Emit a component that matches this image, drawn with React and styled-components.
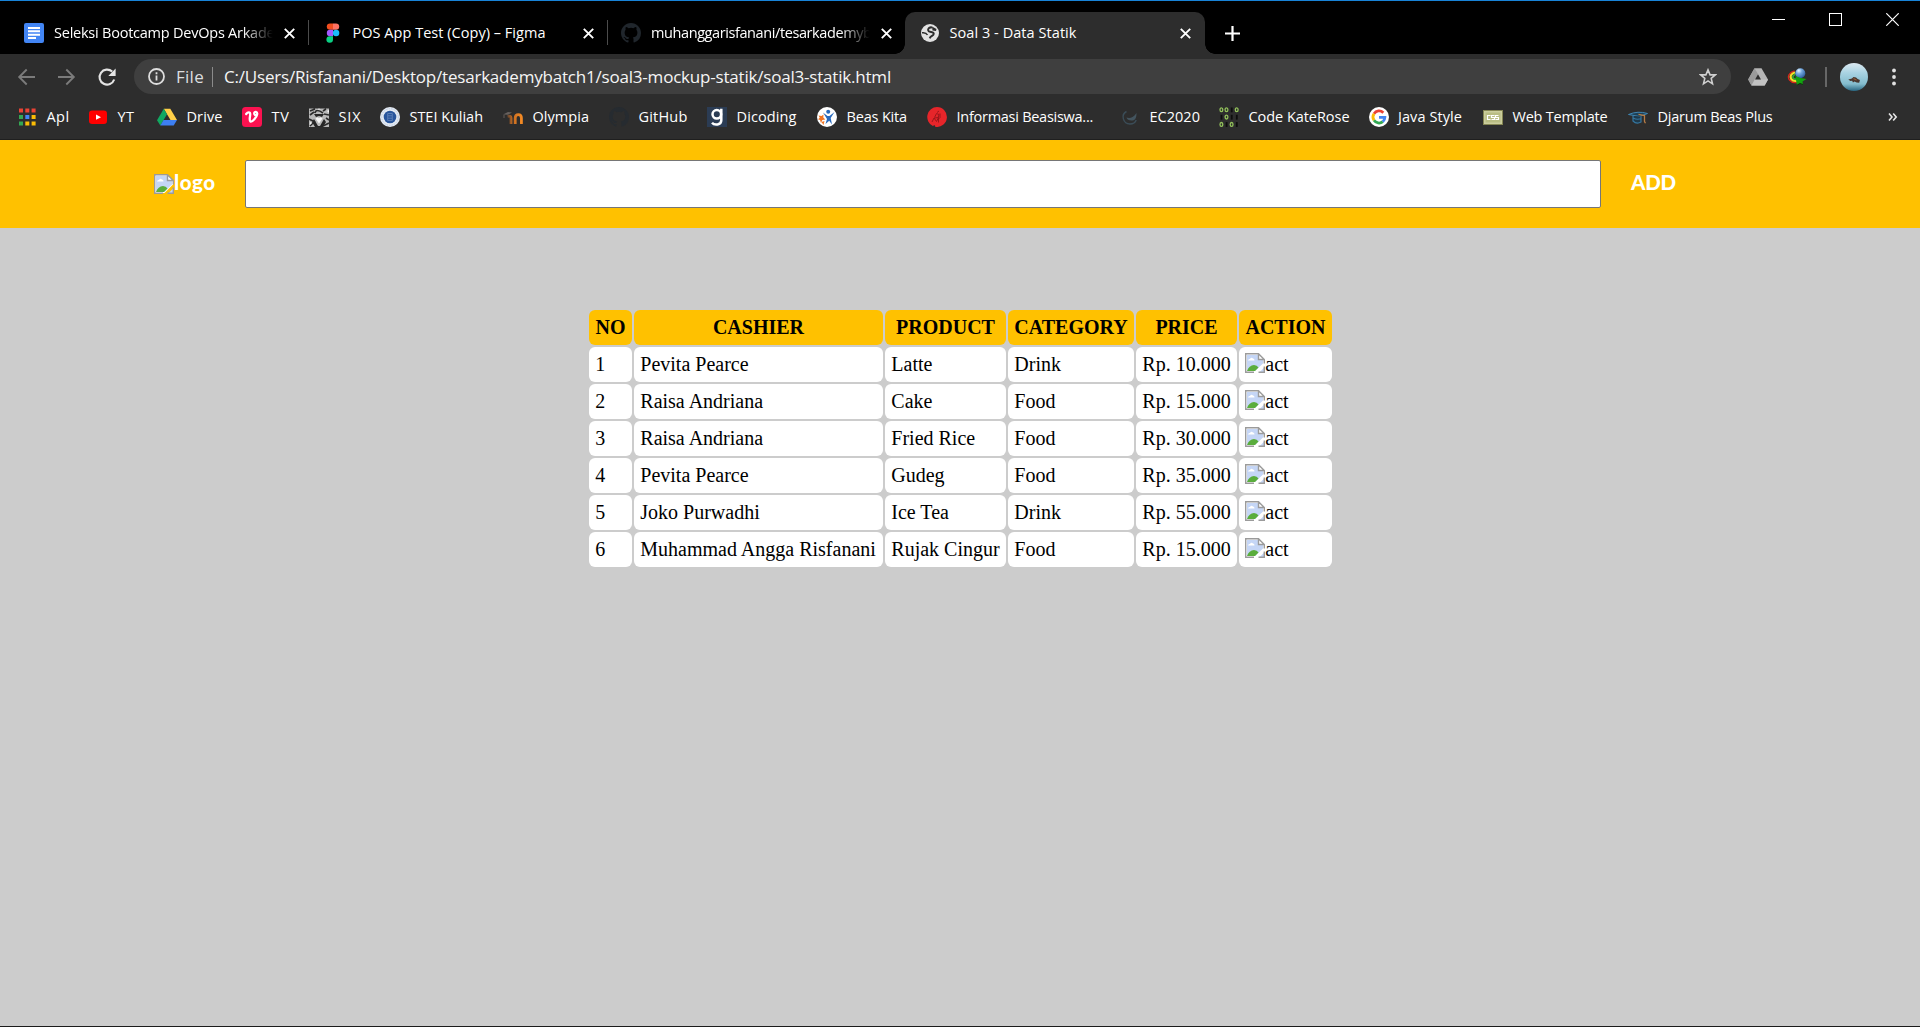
import React, { useLayoutEffect, useRef, useState } from "react";
import styled, { createGlobalStyle, css } from "styled-components";

const GlobalStyle = createGlobalStyle`
  *, *::before, *::after { box-sizing: border-box; }
  html, body { margin: 0; padding: 0; }
  body { background: #cccccc; overflow: hidden; }
  svg { display: block; flex: none; }
`;

const ui = css`
  font-family: "Open Sans", "Noto Sans", sans-serif;
  font-weight: 400;
  white-space: nowrap;
`;

const Window = styled.div`
  width: 1920px;
  height: 1027px;
  display: flex;
  flex-direction: column;
  background: #cccccc;
  border-bottom: 1px solid #1b1b1b;
`;

/* ---------- tab strip ---------- */
const TabStrip = styled.div`
  height: 54px;
  flex: none;
  display: flex;
  align-items: flex-end;
  background: #000;
  border-top: 1px solid #1883d7;
  padding-left: 10.5px;
`;

const Tab = styled.div`
  position: relative;
  width: 298.5px;
  height: 42px;
  flex: none;
  display: flex;
  align-items: center;
  padding: 0 14px 0 13.5px;
  color: #fff;
  background: ${(p) => (p.$active ? "#2d2d2d" : "transparent")};
  border-radius: 10px 10px 0 0;
  ${(p) =>
    p.$active &&
    css`
      width: 300px;
      margin-left: -1px;
      padding-left: 14.5px;
      &::before,
      &::after {
        content: "";
        position: absolute;
        bottom: 0;
        width: 10px;
        height: 10px;
      }
      &::before {
        left: -10px;
        background: radial-gradient(circle at 0 0, transparent 9.5px, #2d2d2d 10px);
      }
      &::after {
        right: -10px;
        background: radial-gradient(circle at 100% 0, transparent 9.5px, #2d2d2d 10px);
      }
    `}
`;

const TabTitle = styled.div`
  ${ui}
  flex: 1;
  min-width: 0;
  height: 22px;
  line-height: 22px;
  margin-left: 10px;
  margin-right: 9px;
  font-size: 14.5px;
  ${(p) =>
    p.$fade &&
    css`
      mask-image: linear-gradient(to right, #000 calc(100% - 32px), transparent 99%);
    `}
`;

const TabDivider = styled.div`
  position: absolute;
  right: 0;
  top: 8px;
  width: 1px;
  height: 25px;
  background: #4c4c4c;
`;

const NewTab = styled.div`
  width: 15px;
  height: 42px;
  margin-left: 20px;
  display: flex;
  align-items: center;
`;

const WindowButtons = styled.div`
  margin-left: auto;
  align-self: flex-start;
  padding: 12px 21px 0 0;
  display: flex;
  gap: 44px;
`;

/* ---------- toolbar ---------- */
const Toolbar = styled.div`
  height: 45px;
  flex: none;
  display: flex;
  align-items: center;
  background: #2d2d2d;
  padding: 0 0 0 17px;
`;

const NavButtons = styled.div`
  display: flex;
  gap: 20px;
  width: 117px;
`;

const Omnibox = styled.div`
  width: 1597px;
  height: 35px;
  flex: none;
  border-radius: 18px;
  background: #3f3f3f;
  display: flex;
  align-items: center;
  padding: 0 14px;
  color: #f1f3f4;
`;

const UrlText = styled.div`
  ${ui}
  font-size: 17px;
  line-height: 24px;
  margin-left: ${(p) => p.$left}px;
  color: ${(p) => p.$color};
`;

const Bar = styled.div`
  width: ${(p) => p.$w || 1}px;
  height: 20px;
  flex: none;
  margin-left: ${(p) => p.$left}px;
  background: ${(p) => p.$color};
`;

const StarSlot = styled.div`
  margin-left: auto;
`;

const Extensions = styled.div`
  display: flex;
  align-items: center;
  padding-left: 17px;
`;

const Spaced = styled.div`
  margin-left: ${(p) => p.$left}px;
`;

/* ---------- bookmarks ---------- */
const BookmarkBar = styled.div`
  height: 41px;
  flex: none;
  display: flex;
  align-items: center;
  background: #2d2d2d;
  border-bottom: 1px solid #1f1f1f;
  padding: 0 0 4px 17px;
`;

const Bookmark = styled.div`
  width: ${(p) => p.$pitch}px;
  height: 24px;
  flex: none;
  display: flex;
  align-items: center;
  gap: 9.5px;
`;

const BookmarkLabel = styled.div`
  ${ui}
  font-size: 14.5px;
  line-height: 22px;
  color: #fff;
`;

/* ---------- page ---------- */
const Header = styled.header`
  height: 88px;
  flex: none;
  background: #ffc100;
  display: flex;
  align-items: center;
  padding: 0 154px;
`;

const Brand = styled.div`
  width: 91px;
  display: flex;
  align-items: center;
`;

const brandText = css`
  font-family: Lato, sans-serif;
  font-weight: 900;
  font-size: 20.5px;
  line-height: 26px;
  color: #fff;
  white-space: nowrap;
`;

const BrandText = styled.div`
  ${brandText}
  margin-top: -5px;
`;

const SearchInput = styled.input`
  width: 1356px;
  height: 48px;
  flex: none;
  border: 1px solid #767676;
  border-radius: 2px;
  background: #fff;
  outline: none;
`;

const AddLink = styled.div`
  ${brandText}
  margin-left: 30px;
  margin-top: -4px;
`;

const Table = styled.table`
  width: 747px;
  margin: 80px 0 0 587px;
  table-layout: fixed;
  border-collapse: separate;
  border-spacing: 2px;
  font-family: "Liberation Serif", "Times New Roman", serif;
  font-size: 20px;
  line-height: 23px;
  color: #000;
`;

const Th = styled.th`
  height: 35px;
  padding: 6px 0;
  background: #ffc100;
  border-radius: 6px;
  font-weight: 700;
  text-align: center;
  white-space: nowrap;
`;

const Td = styled.td`
  height: 35px;
  padding: 6px 0 6px 6.3px;
  background: #fff;
  border-radius: 6px;
  white-space: nowrap;
`;

const ActionCell = styled.div`
  display: flex;
  align-items: flex-start;
  height: 23px;
`;

/* Spreads the letters of its text so that they span the given width. */
const FitSpan = styled.span`
  display: inline-block;
  white-space: pre;
`;

function Fit({ width, children }) {
  const ref = useRef(null);
  const [spacing, setSpacing] = useState(0);
  useLayoutEffect(() => {
    const natural = ref.current.getBoundingClientRect().width;
    setSpacing((width - natural) / children.length);
  }, [width, children]);
  return (
    <FitSpan ref={ref} style={{ letterSpacing: `${spacing}px` }}>
      {children}
    </FitSpan>
  );
}

/* ---------- icons ---------- */
const CloseIcon = () => (
  <svg width="11" height="11" viewBox="0 0 11 11">
    <path d="M.8.8l9.4 9.4M10.2.8L.8 10.2" stroke="#fff" strokeWidth="1.9" />
  </svg>
);

const DocsIcon = () => (
  <svg width="20" height="20" viewBox="0 0 20 20">
    <rect width="20" height="20" rx="2" fill="#4285f4" />
    <path d="M4 5h12M4 8.3h12M4 11.7h12M4 15h8" stroke="#fff" strokeWidth="1.9" />
  </svg>
);

const FigmaIcon = () => (
  <svg width="20" height="20" viewBox="0 0 20 20">
    <path d="M10 .4H7a3.2 3.2 0 000 6.4h3z" fill="#f24e1e" />
    <path d="M10 .4h3a3.2 3.2 0 010 6.4h-3z" fill="#ff7262" />
    <path d="M10 6.8H7a3.2 3.2 0 000 6.4h3z" fill="#a259ff" />
    <circle cx="13.1" cy="10" r="3.2" fill="#1abcfe" />
    <path d="M10 13.2H7a3.3 3.3 0 103 3.3z" fill="#0acf83" />
  </svg>
);

const GithubIcon = ({ color }) => (
  <svg width="20" height="20" viewBox="0 0 16 16" fill={color}>
    <path d="M8 0C3.58 0 0 3.58 0 8c0 3.54 2.29 6.53 5.47 7.59.4.07.55-.17.55-.38 0-.19-.01-.82-.01-1.49-2.01.37-2.53-.49-2.69-.94-.09-.23-.48-.94-.82-1.13-.28-.15-.68-.52-.01-.53.63-.01 1.08.58 1.23.82.72 1.21 1.87.87 2.33.66.07-.52.28-.87.51-1.07-1.78-.2-3.64-.89-3.64-3.95 0-.87.31-1.59.82-2.15-.08-.2-.36-1.02.08-2.12 0 0 .67-.21 2.2.82a7.6 7.6 0 014 0c1.53-1.04 2.2-.82 2.2-.82.44 1.1.16 1.92.08 2.12.51.56.82 1.27.82 2.15 0 3.07-1.87 3.75-3.65 3.95.29.25.54.73.54 1.48 0 1.07-.01 1.93-.01 2.2 0 .21.15.46.55.38A8.01 8.01 0 0016 8c0-4.42-3.58-8-8-8z" />
  </svg>
);

const GlobeIcon = () => (
  <svg width="20" height="20" viewBox="0 0 20 20">
    <circle cx="10" cy="10" r="9" fill="#e2e2e2" />
    <g fill="none" stroke="#2d2d2d">
      <path d="M12 4.500C8.500 3.800 7.300 6.600 8.700 8.200c1.500 1.300 5.300.3 5 2.800-.3 2.200-3 1.600-4 4.300" strokeWidth="2" />
      <path d="M2 9.800q4-.6 5.500 2.200" strokeWidth="1.500" />
    </g>
    <path d="M12 3.500l4.500 2.500-.5 2-3.500-.5z" fill="#2d2d2d" />
  </svg>
);

const Arrow = ({ flip }) => (
  <svg width="20" height="20" viewBox="0 0 20 20">
    <path
      d={flip ? "M1 10h15.500M9.300 2.500l7.500 7.500-7.500 7.500" : "M18 10H2.500M9.700 2.500L2.200 10l7.500 7.500"}
      fill="none"
      stroke="#7b7b7b"
      strokeWidth="1.9"
    />
  </svg>
);

const ReloadIcon = () => (
  <svg width="20" height="20" viewBox="0 0 20 20">
    <path d="M15.200 4.600A7.500 7.500 0 1017.200 12.500" fill="none" stroke="#e4e4e4" strokeWidth="2.100" />
    <path d="M18.600 1.600v7.300h-7.300z" fill="#e4e4e4" />
  </svg>
);

const InfoIcon = () => (
  <svg width="17" height="17" viewBox="0 0 17 17">
    <circle cx="8.500" cy="8.500" r="7.500" fill="none" stroke="#dedede" strokeWidth="1.800" />
    <path d="M8.500 7.500v5M8.500 4.300v1.900" stroke="#dedede" strokeWidth="1.800" />
  </svg>
);

const StarIcon = () => (
  <svg width="18" height="18" viewBox="0 0 18 18">
    <path
      d="M9 1.900l2.100 5h5.200l-4.100 3.500 1.300 5.400L9 12.900l-4.500 2.900 1.300-5.400L1.700 6.900h5.200z"
      fill="none"
      stroke="#cfcfcf"
      strokeWidth="1.600"
    />
  </svg>
);

const DriveIcon = ({ gray }) => (
  <svg width="20" height="20" viewBox="0 0 20 20">
    {gray ? (
      <>
        <path d="M6.500 1.200h7L20 12.500l-3.300 6H3.500L.2 12.500z" fill="#b5b5b5" />
        <path d="M6.500 1.200L.2 12.500l3.300 6L10 7z" fill="#9a9a9a" />
        <path d="M3.500 18.500l3.300-6H20l-3.300 6z" fill="#c2c2c2" />
        <path d="M10 7.300l3 5.200H7z" fill="#2d2d2d" />
      </>
    ) : (
      <>
        <path d="M6.800 1.800h6.500L20 13h-6.500z" fill="#ffcf48" />
        <path d="M6.800 1.800L0 13.300l3.300 5.200L10 7.200z" fill="#11a861" />
        <path d="M3.300 18.500l3.200-5.500H20l-3.300 5.500z" fill="#3d7ff2" />
      </>
    )}
  </svg>
);

const IdmIcon = () => (
  <svg width="20" height="20" viewBox="0 0 20 20">
    <defs>
      <radialGradient id="idm" cx=".35" cy=".25" r=".8">
        <stop offset="0" stopColor="#e9f6ff" />
        <stop offset=".4" stopColor="#71a6dd" />
        <stop offset="1" stopColor="#285b9a" />
      </radialGradient>
    </defs>
    <path d="M7.500 4C2.500 5-.2 9.500 2.500 13s8 3 11 1.500" fill="none" stroke="#d8281c" strokeWidth="1.300" />
    <path d="M8 5.500C4 6.500 2.500 9.500 4.300 12s6 2 9 .7" fill="none" stroke="#f7df27" strokeWidth="2.200" />
    <path d="M8.500 7.200c-3 1-3.300 3.600-1.700 4.600s4 .6 6 .3" fill="none" stroke="#35a832" strokeWidth="1.800" />
    <circle cx="13.300" cy="6.200" r="5" fill="url(#idm)" />
    <path d="M8.500 9l5 2 6 1-4 2.500.5 3-3-1.300-3.300 1.300z" fill="#13a30f" />
    <path d="M10.500 18l2.500-1.500 3 1" fill="none" stroke="#073f08" strokeWidth="1" />
  </svg>
);

const Avatar = () => (
  <svg width="28" height="28" viewBox="0 0 27 27">
    <defs>
      <linearGradient id="sea" x1="0" y1="0" x2="0" y2="1">
        <stop offset="0" stopColor="#dce9f1" />
        <stop offset=".35" stopColor="#a9d3e2" />
        <stop offset=".75" stopColor="#83bccd" />
        <stop offset="1" stopColor="#286681" />
      </linearGradient>
    </defs>
    <circle cx="13.500" cy="13.500" r="13.500" fill="url(#sea)" />
    <path d="M8 16l3.500-1 1.500-1.500 2.500.5 1.500 1.500 2.200 1-.7 2.500-2.500-.2-2-1-1.500 1-.8-1.800-1.700.3z" fill="#49372f" />
    <path d="M13 15l3 1.500" stroke="#99613a" strokeWidth="1" />
  </svg>
);

const DotsIcon = () => (
  <svg width="6" height="18" viewBox="0 0 6 18" fill="#e1e1e1">
    <circle cx="3" cy="2.500" r="1.900" />
    <circle cx="3" cy="9" r="1.900" />
    <circle cx="3" cy="15.500" r="1.900" />
  </svg>
);

const appColors = ["#ea4335", "#ea4335", "#ea4335", "#34a853", "#4285f4", "#fbbc05", "#34a853", "#fbbc05", "#fbbc05"];
const AppsIcon = () => (
  <svg width="20" height="20" viewBox="0 0 20 20">
    {appColors.map((c, i) => (
      <rect key={i} x={2 + (i % 3) * 6.3} y={1.5 + Math.floor(i / 3) * 6.5} width="4" height="4" fill={c} />
    ))}
  </svg>
);

const YoutubeIcon = () => (
  <svg width="20" height="20" viewBox="0 0 20 20">
    <rect x="1" y="3.500" width="18" height="13.500" rx="3.200" fill="#f00" />
    <path d="M8 7.500v5.300l5-2.600z" fill="#fff" />
  </svg>
);

const VidioIcon = () => (
  <svg width="20" height="20" viewBox="0 0 20 20">
    <rect width="20" height="20" rx="3.500" fill="#fb1250" />
    <path
      d="M4.200 7c1.500-2 4-2.200 4 .2 0 2.300-1.300 5.800.2 7.300 2 .8 6.300-4.200 6.800-7.400.3-2.700-2.800-3-3-.8 0 1.600 1.300 2.300 2.700 1.800"
      fill="none"
      stroke="#fff"
      strokeWidth="2.300"
      strokeLinecap="round"
    />
  </svg>
);

const SixIcon = () => (
  <svg width="20" height="20" viewBox="0 0 20 20">
    <rect width="20" height="20" fill="#b9b9b9" />
    <path
      d="M0 .6h20M1 4l5-2M1 8l4-3M6 6q1-5 8 0M17 2l-3 2M15 7l5 1M17 11l3 2M0 12l4 2M1 19l5-5M14 19l6-3"
      fill="none"
      stroke="#2c2c2c"
      strokeWidth="1.600"
    />
    <path d="M5 7h10l-2 3-3-1-3 1zM5 12l4 7h2l4-7 2 3-3 5H6l-3-5z" fill="#262626" />
    <path d="M6.500 11.500l2-1.300 1.500 1 1.500-1 2 1.300-3.500 5zM8 2.500l2-1 2 1zM1 15l2 1-2 2zM18 4l2 2v-3z" fill="#f4f4f4" />
  </svg>
);

const SteiIcon = () => (
  <svg width="20" height="20" viewBox="0 0 20 20">
    <circle cx="10" cy="10" r="10" fill="#e4eaf3" />
    <circle cx="10" cy="10" r="8.300" fill="none" stroke="#bccbe0" strokeWidth="1" strokeDasharray="1.500 1" />
    <circle cx="10" cy="10" r="6.300" fill="#28559c" />
    <path d="M7.700 6.500h4.600v7H7.700zM8 8.800h4M8 11.200h4" fill="none" stroke="#6487bb" strokeWidth=".8" />
  </svg>
);

const MoodleIcon = () => (
  <svg width="20" height="20" viewBox="0 0 20 20">
    <defs>
      <linearGradient id="moodle" gradientUnits="userSpaceOnUse" x1="3" y1="0" x2="19" y2="0">
        <stop offset="0" stopColor="#4b3b32" />
        <stop offset=".45" stopColor="#c96d21" />
        <stop offset="1" stopColor="#f58b24" />
      </linearGradient>
    </defs>
    <path d="M0 7.500l5-2.500 4 .5-4 2.300z" fill="#67615e" />
    <path d="M1 8v3" stroke="#675c56" strokeWidth="1" />
    <path
      d="M4.500 9.500q3.500-1 3.500 1.500v6M12.200 17v-6c0-4.500 6.200-4.500 6.200 0v6"
      fill="none"
      stroke="url(#moodle)"
      strokeWidth="2.800"
    />
  </svg>
);

const DicodingIcon = () => (
  <svg width="20" height="20" viewBox="0 0 20 20">
    <rect width="20" height="20" fill="#2b3c54" />
    <circle cx="9.800" cy="7.300" r="4.300" fill="none" stroke="#fff" strokeWidth="2.500" />
    <path d="M14.300 1.800v11.500c0 5-7 5.200-9.300 2.500" fill="none" stroke="#fff" strokeWidth="2.500" />
  </svg>
);

const BeasIcon = () => (
  <svg width="20" height="20" viewBox="0 0 20 20">
    <circle cx="10" cy="10" r="10" fill="#fff" />
    <circle cx="11.200" cy="4.800" r="2" fill="#2769bd" />
    <path d="M6 5.500l4.500 3.500h2l5-4-3.800 6 1.300 6.500-2.800-3.700-3.700 3.200 1.500-5z" fill="#2769bd" />
    <path d="M1.500 8.500l3 .5 2-1.500-.2 3 2 2-3 .5-1.300 3-1-3-2-.7 1.800-1.600zM4.500 15l3-1-1 4z" fill="#f17423" />
  </svg>
);

const InfoBeasIcon = () => (
  <svg width="20" height="20" viewBox="0 0 20 20">
    <path d="M10 0a10 10 0 11-1.500 19.900L7.500 18l-1.600 1A10 10 0 0110 0z" fill="#e6252a" />
    <path
      d="M5 15l2-4 2.500 3.500 2-4v5M7.500 10.500l2-4 2.500 1-.8 3-3.700.5M10 5.500l2-1.500M13 6.500v4l-2 2"
      fill="none"
      stroke="#931519"
      strokeWidth=".9"
    />
  </svg>
);

const EcIcon = () => (
  <svg width="20" height="20" viewBox="0 0 20 20">
    <path d="M6.500 4.500C.5 7.500 3 17 10 17c3.500 0 5.500-2 6.200-4" fill="none" stroke="#3b4d58" strokeWidth="1.400" />
    <path d="M6.500 10.500c3 1 7 .5 10-4.500 0 6-1.800 7.500-5 7.500-3 0-4.500-1-5-3z" fill="#43545e" />
  </svg>
);

const bitRows = [
  [1, 1, 0, 1],
  [0, 1, 0, 0],
  [1, 0, 1, 0],
];
const CodeIcon = () => (
  <svg width="20" height="20" viewBox="0 0 20 20">
    {bitRows.map((bits, r) =>
      bits.map((zero, c) =>
        zero ? (
          <ellipse
            key={`${c}${r}`}
            cx={2.4 + c * 5.1}
            cy={2.8 + r * 7.3}
            rx="1.4"
            ry="1.9"
            fill="none"
            stroke="#93c25b"
            strokeWidth="1.3"
          />
        ) : (
          <rect key={`${c}${r}`} x={1.6 + c * 5.1} y={0.5 + r * 7.3} width="1.8" height="4.8" fill="#0d0d0d" />
        )
      )
    )}
  </svg>
);

const GoogleIcon = () => (
  <svg width="20" height="20" viewBox="0 0 20 20">
    <circle cx="10" cy="10" r="10" fill="#fff" />
    <g fill="none" strokeWidth="2.800">
      <path d="M14.300 5.700A6 6 0 005 6.700" stroke="#ea4335" />
      <path d="M5 6.700a6 6 0 000 6.600" stroke="#fbbc05" />
      <path d="M5 13.300a6 6 0 008.800 1.400" stroke="#34a853" />
      <path d="M13.800 14.700A6 6 0 0015.900 10.300H10" stroke="#4285f4" />
    </g>
  </svg>
);

const CssIcon = () => (
  <svg width="20" height="20" viewBox="0 0 20 20">
    <rect x=".5" y="3.500" width="19" height="14" fill="#cbcd9c" stroke="#858653" />
    <rect x="2.500" y="5.500" width="15" height="10" fill="#b9bd83" />
    <path
      d="M7.500 8.500h-3v4h3M11.500 8.500h-3v2h3v2h-3M15.500 8.500h-3v2h3v2h-3"
      fill="none"
      stroke="#fff"
      strokeWidth="1.200"
    />
  </svg>
);

const CapIcon = () => (
  <svg width="20" height="20" viewBox="0 0 20 20">
    <path d="M.5 7.500Q10 3.500 19.500 6.500L11.500 9.500z" fill="#1e4055" stroke="#3f86b3" strokeWidth="1" />
    <path d="M5 9v5q3.500 3.500 8 1V9.500M5.200 11q3.500 2 7.500.8" fill="#1f394a" stroke="#3476a0" strokeWidth="1.200" />
    <path d="M10.500 7.300l6 1.200v6l1 1.800" fill="none" stroke="#b77c45" strokeWidth="1.300" />
  </svg>
);

const ChevronsIcon = () => (
  <svg width="10" height="10" viewBox="0 0 10 10">
    <path d="M1 1.500L4 5 1 8.500M5.200 1.500l3 3.500-3 3.500" fill="none" stroke="#e6e6e6" strokeWidth="1.600" />
  </svg>
);

const BrokenImageIcon = () => (
  <svg width="20" height="20" viewBox="0 0 20 20">
    <path d="M1 1h13l5 5v4.500L10.500 19H1z" fill="#fff" />
    <path d="M2 2h11.500v4.500H18v4L10 18H2z" fill="#c5d6f6" />
    <path d="M3 7.500q.2-1.700 2-1.500 1-2 3-.5 1.500 0 1.500 2z" fill="#fff" />
    <path d="M2 18q2-5.500 7-6 3 0 4.500 2.500L10 18z" fill="#5aad3c" />
    <path d="M9 19.300H.7V.7H13.500L19.300 6.500v4M13.500 1v5.500H19" fill="none" stroke="#9b9b9b" strokeWidth="1.400" />
    <path d="M14.500 19.300h4.800v-5z" fill="#c5d6f6" />
    <path d="M13.500 19.300h5.800V13.500" fill="none" stroke="#9b9b9b" strokeWidth="1.400" />
  </svg>
);

/* ---------- data ---------- */
const tabs = [
  { icon: <DocsIcon />, title: "Seleksi Bootcamp DevOps Arkade", width: 220.5, fade: true, divider: true },
  { icon: <FigmaIcon />, title: "POS App Test (Copy) – Figma", width: 193, divider: true },
  { icon: <GithubIcon color="#20262c" />, title: "muhanggarisfanani/tesarkademyb", width: 220.5, fade: true },
  { icon: <GlobeIcon />, title: "Soal 3 - Data Statik", width: 127, active: true },
];

const bookmarks = [
  [AppsIcon, "Apl", 71, 23],
  [YoutubeIcon, "YT", 69, 17],
  [DriveIcon, "Drive", 85, 36],
  [VidioIcon, "TV", 67, 18],
  [SixIcon, "SIX", 71, 23],
  [SteiIcon, "STEI Kuliah", 123, 73.5],
  [MoodleIcon, "Olympia", 106, 56.5],
  [() => <GithubIcon color="#262b30" />, "GitHub", 98, 49],
  [DicodingIcon, "Dicoding", 110, 60],
  [BeasIcon, "Beas Kita", 110, 60.5],
  [InfoBeasIcon, "Informasi Beasiswa...", 193, 136.5],
  [EcIcon, "EC2020", 99, 50.5],
  [CodeIcon, "Code KateRose", 149.5, 101],
  [GoogleIcon, "Java Style", 114.5, 64],
  [CssIcon, "Web Template", 145, 95],
  [CapIcon, "Djarum Beas Plus", 259.5, 115],
];

const columns = [
  ["NO", 43],
  ["CASHIER", 249],
  ["PRODUCT", 121],
  ["CATEGORY", 126],
  ["PRICE", 101],
  ["ACTION", 93],
];

const rows = [
  ["1", "Pevita Pearce", "Latte", "Drink", "Rp. 10.000"],
  ["2", "Raisa Andriana", "Cake", "Food", "Rp. 15.000"],
  ["3", "Raisa Andriana", "Fried Rice", "Food", "Rp. 30.000"],
  ["4", "Pevita Pearce", "Gudeg", "Food", "Rp. 35.000"],
  ["5", "Joko Purwadhi", "Ice Tea", "Drink", "Rp. 55.000"],
  ["6", "Muhammad Angga Risfanani", "Rujak Cingur", "Food", "Rp. 15.000"],
];

export default function App() {
  return (
    <>
      <GlobalStyle />
      <Window>
        <TabStrip>
          {tabs.map((t) => (
            <Tab key={t.title} $active={t.active}>
              {t.icon}
              <TabTitle $fade={t.fade}>
                <Fit width={t.width}>{t.title}</Fit>
              </TabTitle>
              <CloseIcon />
              {t.divider && <TabDivider />}
            </Tab>
          ))}
          <NewTab>
            <svg width="15" height="15" viewBox="0 0 15 15">
              <path d="M7.500 0v15M0 7.500h15" stroke="#fff" strokeWidth="2.200" />
            </svg>
          </NewTab>
          <WindowButtons>
            <svg width="13" height="13" viewBox="0 0 13 13">
              <path d="M0 6.500h13" stroke="#fff" />
            </svg>
            <svg width="13" height="13" viewBox="0 0 13 13">
              <rect x=".5" y=".5" width="12" height="12" fill="none" stroke="#fff" />
            </svg>
            <svg width="13" height="13" viewBox="0 0 13 13">
              <path d="M.3.3l12.400 12.400M12.700.3L.3 12.700" stroke="#fff" strokeWidth="1.200" />
            </svg>
          </WindowButtons>
        </TabStrip>

        <Toolbar>
          <NavButtons>
            <Arrow />
            <Arrow flip />
            <ReloadIcon />
          </NavButtons>
          <Omnibox>
            <InfoIcon />
            <UrlText $left={11} $color="#dcdedf">
              <Fit width={28}>File</Fit>
            </UrlText>
            <Bar $left={7.5} $w={1.5} $color="#8b8b8b" />
            <UrlText $left={11} $color="#f5f5f5">
              <Fit width={667}>C:/Users/Risfanani/Desktop/tesarkademybatch1/soal3-mockup-statik/soal3-statik.html</Fit>
            </UrlText>
            <StarSlot>
              <StarIcon />
            </StarSlot>
          </Omnibox>
          <Extensions>
            <DriveIcon gray />
            <Spaced $left={19}>
              <IdmIcon />
            </Spaced>
            <Bar $left={18} $w={1.5} $color="#676767" />
            <Spaced $left={13.5}>
              <Avatar />
            </Spaced>
            <Spaced $left={23}>
              <DotsIcon />
            </Spaced>
          </Extensions>
        </Toolbar>

        <BookmarkBar>
          {bookmarks.map(([Icon, label, pitch, width]) => (
            <Bookmark key={label} $pitch={pitch}>
              <Icon />
              <BookmarkLabel>
                <Fit width={width}>{label}</Fit>
              </BookmarkLabel>
            </Bookmark>
          ))}
          <ChevronsIcon />
        </BookmarkBar>

        <Header>
          <Brand>
            <BrokenImageIcon />
            <BrandText>
              <Fit width={41.5}>logo</Fit>
            </BrandText>
          </Brand>
          <SearchInput />
          <AddLink>
            <Fit width={45}>ADD</Fit>
          </AddLink>
        </Header>

        <Table>
          <colgroup>
            {columns.map(([name, w]) => (
              <col key={name} width={w} />
            ))}
          </colgroup>
          <thead>
            <tr>
              {columns.map(([name]) => (
                <Th key={name}>{name}</Th>
              ))}
            </tr>
          </thead>
          <tbody>
            {rows.map((row) => (
              <tr key={row[0]}>
                {row.map((cell, i) => (
                  <Td key={i}>{cell}</Td>
                ))}
                <Td>
                  <ActionCell>
                    <BrokenImageIcon />
                    <span>act</span>
                  </ActionCell>
                </Td>
              </tr>
            ))}
          </tbody>
        </Table>
      </Window>
    </>
  );
}
